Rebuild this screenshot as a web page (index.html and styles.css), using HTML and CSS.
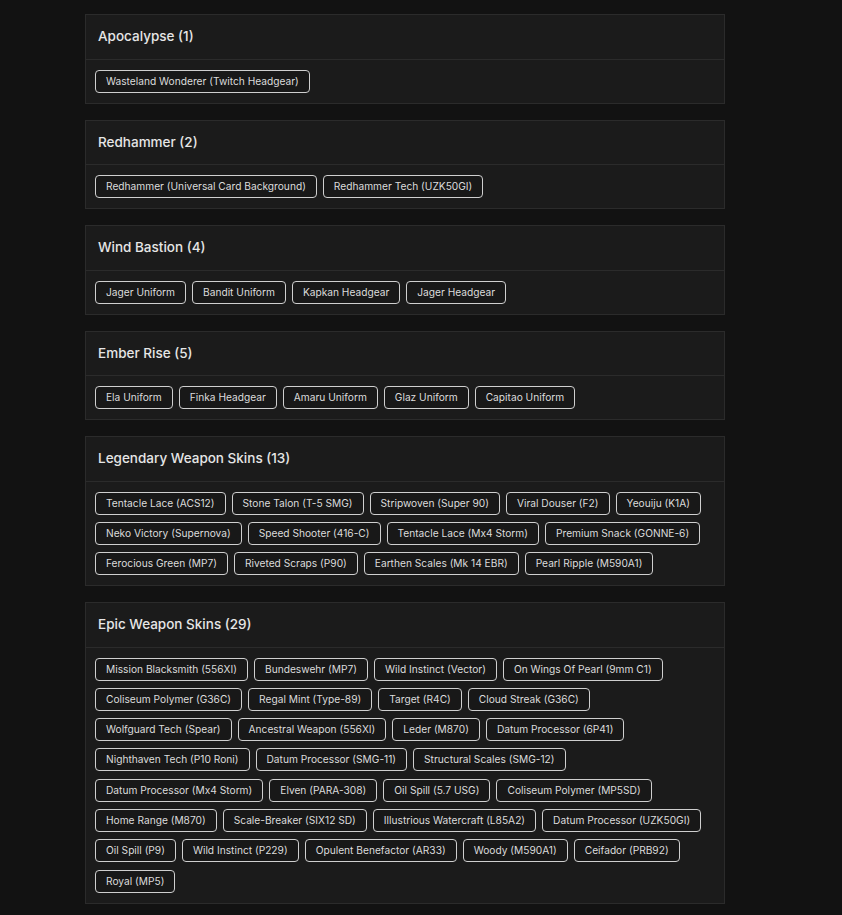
FILE: index.html
```html
<!DOCTYPE html>
<html lang="en">
<head>
<meta charset="UTF-8">
<meta name="viewport" content="width=device-width, initial-scale=1.0">
<title>Bundle Contents</title>
<link rel="stylesheet" href="styles.css">
</head>
<body>
<div class="page">
    <div class="card">
        <div class="card-header">Apocalypse (1)</div>
        <div class="card-body">
            <span class="tag">Wasteland Wonderer (Twitch Headgear)</span>
        </div>
    </div>
    <div class="card">
        <div class="card-header">Redhammer (2)</div>
        <div class="card-body">
            <span class="tag">Redhammer (Universal Card Background)</span>
            <span class="tag">Redhammer Tech (UZK50GI)</span>
        </div>
    </div>
    <div class="card">
        <div class="card-header">Wind Bastion (4)</div>
        <div class="card-body">
            <span class="tag">Jager Uniform</span>
            <span class="tag">Bandit Uniform</span>
            <span class="tag">Kapkan Headgear</span>
            <span class="tag">Jager Headgear</span>
        </div>
    </div>
    <div class="card">
        <div class="card-header">Ember Rise (5)</div>
        <div class="card-body">
            <span class="tag">Ela Uniform</span>
            <span class="tag">Finka Headgear</span>
            <span class="tag">Amaru Uniform</span>
            <span class="tag">Glaz Uniform</span>
            <span class="tag">Capitao Uniform</span>
        </div>
    </div>
    <div class="card">
        <div class="card-header">Legendary Weapon Skins (13)</div>
        <div class="card-body">
            <span class="tag">Tentacle Lace (ACS12)</span>
            <span class="tag">Stone Talon (T-5 SMG)</span>
            <span class="tag">Stripwoven (Super 90)</span>
            <span class="tag">Viral Douser (F2)</span>
            <span class="tag">Yeouiju (K1A)</span>
            <span class="tag">Neko Victory (Supernova)</span>
            <span class="tag">Speed Shooter (416-C)</span>
            <span class="tag">Tentacle Lace (Mx4 Storm)</span>
            <span class="tag">Premium Snack (GONNE-6)</span>
            <span class="tag">Ferocious Green (MP7)</span>
            <span class="tag">Riveted Scraps (P90)</span>
            <span class="tag">Earthen Scales (Mk 14 EBR)</span>
            <span class="tag">Pearl Ripple (M590A1)</span>
        </div>
    </div>
    <div class="card">
        <div class="card-header">Epic Weapon Skins (29)</div>
        <div class="card-body">
            <span class="tag">Mission Blacksmith (556XI)</span>
            <span class="tag">Bundeswehr (MP7)</span>
            <span class="tag">Wild Instinct (Vector)</span>
            <span class="tag">On Wings Of Pearl (9mm C1)</span>
            <span class="tag">Coliseum Polymer (G36C)</span>
            <span class="tag">Regal Mint (Type-89)</span>
            <span class="tag">Target (R4C)</span>
            <span class="tag">Cloud Streak (G36C)</span>
            <span class="tag">Wolfguard Tech (Spear)</span>
            <span class="tag">Ancestral Weapon (556XI)</span>
            <span class="tag">Leder (M870)</span>
            <span class="tag">Datum Processor (6P41)</span>
            <span class="tag">Nighthaven Tech (P10 Roni)</span>
            <span class="tag">Datum Processor (SMG-11)</span>
            <span class="tag">Structural Scales (SMG-12)</span>
            <span class="tag">Datum Processor (Mx4 Storm)</span>
            <span class="tag">Elven (PARA-308)</span>
            <span class="tag">Oil Spill (5.7 USG)</span>
            <span class="tag">Coliseum Polymer (MP5SD)</span>
            <span class="tag">Home Range (M870)</span>
            <span class="tag">Scale-Breaker (SIX12 SD)</span>
            <span class="tag">Illustrious Watercraft (L85A2)</span>
            <span class="tag">Datum Processor (UZK50GI)</span>
            <span class="tag">Oil Spill (P9)</span>
            <span class="tag">Wild Instinct (P229)</span>
            <span class="tag">Opulent Benefactor (AR33)</span>
            <span class="tag">Woody (M590A1)</span>
            <span class="tag">Ceifador (PRB92)</span>
            <span class="tag">Royal (MP5)</span>
        </div>
    </div>
</div>
</body>
</html>
```

FILE: styles.css
```css
body {
    margin: 0;
    background-color: #121212;
    font-family: Inter, 'Noto Sans', sans-serif;
    color: #e6e6e6;
}
.page {
    width: 640px;
    padding: 14px 0 0 85px;
}
.card {
    background-color: #1b1b1b;
    border: 1px solid #2b2b2b;
    margin-bottom: 16px;
}
.card-header {
    height: 43.5px;
    line-height: 43.5px;
    padding: 0 12px;
    font-size: 13.5px;
    font-weight: 500;
    border-bottom: 1px solid #2b2b2b;
}
.card-body {
    display: flex;
    flex-wrap: wrap;
    gap: 7.3px 6px;
    padding: 10px 9px;
}
.tag {
    height: 21px;
    line-height: 21px;
    padding: 0 10px;
    font-size: 10.2px;
    color: #dcdcdc;
    border: 1px solid #cfcfcf;
    border-radius: 4px;
    background-color: #181818;
}
```
